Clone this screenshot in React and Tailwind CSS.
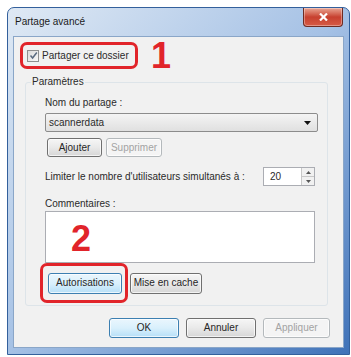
import React from "react";

function Btn({ children, className = "", variant = "normal" }) {
  const styles = {
    normal:
      "border-[#707070] bg-gradient-to-b from-[#f6f6f6] via-[#e9e9e9] to-[#d6d6d6] text-[#262626]",
    blue: "border-[#3c7fb1] bg-gradient-to-b from-[#eaf6fd] via-[#d9f0fc] to-[#b6dff7] text-[#262626]",
    disabled: "border-[#b4b9bc] bg-[#f4f4f4] text-[#a3a3a3]",
  };
  return (
    <div
      className={`flex items-center justify-center rounded-[3px] border text-[10px] leading-none shadow-[inset_0_0_0_1px_rgba(255,255,255,0.7)] ${styles[variant]} ${className}`}
    >
      {children}
    </div>
  );
}

function CloseButton() {
  return (
    <div className="flex h-[19px] w-[40px] items-center justify-center rounded-b-[4px] border border-t-0 border-[#6e2b22] bg-gradient-to-b from-[#e8a493] via-[#c7402f] to-[#d65a45] shadow-[inset_0_0_0_1px_rgba(255,255,255,0.35)]">
      <svg width="9" height="8" viewBox="0 0 9 8">
        <path d="M1 0.5 L8 7.5 M8 0.5 L1 7.5" stroke="#ffffff" strokeWidth="2.2" />
      </svg>
    </div>
  );
}

function Checkbox() {
  return (
    <div className="flex h-[12px] w-[12px] items-center justify-center border border-[#8e8f8f] bg-gradient-to-br from-[#dcdcdc] to-[#f8f8f8]">
      <svg width="9" height="9" viewBox="0 0 9 9">
        <path d="M1.5 4.5 L3.6 7 L7.8 1.5" fill="none" stroke="#5a6b80" strokeWidth="1.5" />
      </svg>
    </div>
  );
}

export default function App() {
  return (
    <div className="h-[357px] w-[351px] bg-white pl-[7px] pt-[7px] font-['Liberation_Sans',Arial,sans-serif] text-[#2a2a2a]">
      {/* Window frame */}
      <div className="flex h-[348px] w-[343px] flex-col rounded-t-[7px] border border-[#33609c] bg-gradient-to-br from-[#dfe9f4] via-[#a5c1e5] to-[#3f72b8] px-[5px] pb-[6px]">
        {/* Title bar */}
        <div className="flex h-[28px] items-start justify-between">
          <span className="mt-[8px] pl-[2px] text-[10px] leading-[12px] text-[#1a1a1a]">
            Partage avancé
          </span>
          <div className="mr-[1px]">
            <CloseButton />
          </div>
        </div>

        {/* Content */}
        <div className="flex flex-1 flex-col border border-[#8aa6c8] bg-[#f1f1f1]">
          {/* Share checkbox + annotation 1 */}
          <div className="ml-[6px] mt-[5px] flex h-[27px] items-start">
            <div className="flex h-[27px] w-[118px] items-center gap-[3px] rounded-[7px] border-[3px] border-[#e1242a] pl-[4px]">
              <Checkbox />
              <span className="text-[10px] leading-none">Partager ce dossier</span>
            </div>
            <span className="-mt-[4px] ml-[13px] text-[36px] font-bold leading-none text-[#e1242a]">
              1
            </span>
          </div>

          {/* Paramètres group */}
          <fieldset className="ml-[11px] mt-[6px] w-[303px] rounded-[3px] border border-[#dde4e9] pb-[2px] pl-[19px]">
            <legend className="ml-[-14px] px-[1px] text-[10px] leading-[14px]">Paramètres</legend>

            <div className="mt-[7px] text-[10px] leading-[14px]">Nom du partage :</div>

            <div className="mt-[3px] flex h-[19px] w-[273px] items-center justify-between rounded-[2px] border border-[#8c8c8c] bg-gradient-to-b from-[#f4f4f4] to-[#e0e0e0] pl-[3px] pr-[6px]">
              <span className="text-[10px] leading-none">scannerdata</span>
              <svg width="7" height="4" viewBox="0 0 7 4">
                <path d="M0 0 H7 L3.5 4 Z" fill="#111" />
              </svg>
            </div>

            <div className="mt-[6px] flex gap-[4px] pl-[2px]">
              <Btn className="h-[19px] w-[55px]">Ajouter</Btn>
              <Btn className="h-[19px] w-[56px]" variant="disabled">
                Supprimer
              </Btn>
            </div>

            <div className="mt-[10px] flex h-[19px] w-[270px] items-center justify-between">
              <span className="text-[10px] leading-none">
                Limiter le nombre d'utilisateurs simultanés à :
              </span>
              <div className="flex h-[19px] w-[52px] border border-[#abadb3] bg-white">
                <span className="flex-1 pl-[6px] pt-[4px] text-[10px] leading-none">20</span>
                <div className="flex w-[13px] flex-col border-l border-[#c8c8c8]">
                  <div className="flex flex-1 items-center justify-center border-b border-[#c8c8c8] bg-[#f1f1f1]">
                    <svg width="5" height="3" viewBox="0 0 5 3">
                      <path d="M0 3 H5 L2.5 0 Z" fill="#555" />
                    </svg>
                  </div>
                  <div className="flex flex-1 items-center justify-center bg-[#f1f1f1]">
                    <svg width="5" height="3" viewBox="0 0 5 3">
                      <path d="M0 0 H5 L2.5 3 Z" fill="#555" />
                    </svg>
                  </div>
                </div>
              </div>
            </div>

            <div className="mt-[11px] text-[10px] leading-[14px]">Commentaires :</div>

            <div className="h-[52px] w-[270px] border border-[#abadb3] bg-white pl-[25px] pt-[9px]">
              <span className="text-[36px] font-bold leading-none text-[#e1242a]">2</span>
            </div>

            <div className="flex items-center">
              <div className="ml-[-5px] flex h-[40px] w-[88px] items-center rounded-[7px] border-[3px] border-[#e1242a] pl-[5px]">
                <Btn className="h-[21px] w-[74px]" variant="blue">
                  Autorisations
                </Btn>
              </div>
              <Btn className="ml-[2px] h-[21px] w-[72px]">Mise en cache</Btn>
            </div>
          </fieldset>

          {/* Dialog buttons */}
          <div className="mt-[12px] flex justify-end gap-[7px] pr-[13px]">
            <Btn className="h-[20px] w-[70px]" variant="blue">
              OK
            </Btn>
            <Btn className="h-[20px] w-[70px]">Annuler</Btn>
            <Btn className="h-[20px] w-[67px]" variant="disabled">
              Appliquer
            </Btn>
          </div>
        </div>
      </div>
    </div>
  );
}
